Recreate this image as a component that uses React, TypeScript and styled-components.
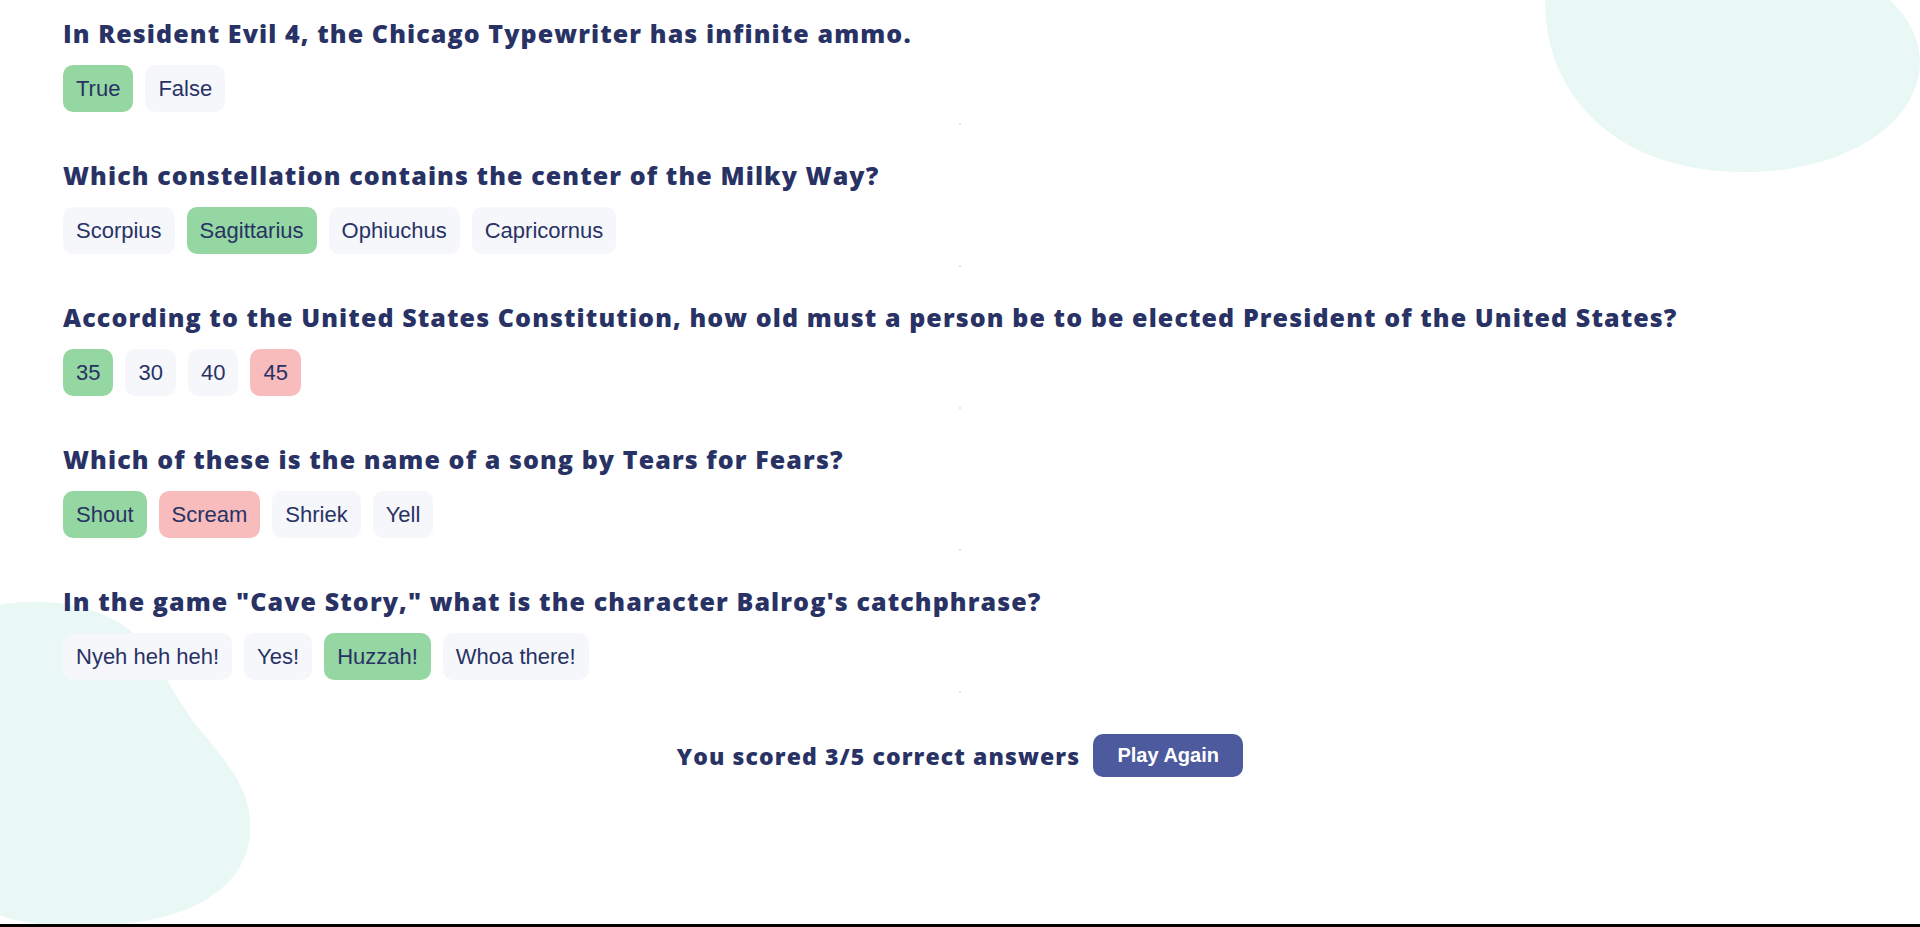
import React from "react";
import styled, { createGlobalStyle } from "styled-components";

const GlobalStyle = createGlobalStyle`
  html, body { margin: 0; padding: 0; background: #ffffff; }
  * { box-sizing: border-box; }
`;

type AnswerState = "neutral" | "correct" | "wrong";

interface Question {
  question: string;
  answers: { text: string; state: AnswerState }[];
}

const questions: Question[] = [
  {
    question: "In Resident Evil 4, the Chicago Typewriter has infinite ammo.",
    answers: [
      { text: "True", state: "correct" },
      { text: "False", state: "neutral" },
    ],
  },
  {
    question: "Which constellation contains the center of the Milky Way?",
    answers: [
      { text: "Scorpius", state: "neutral" },
      { text: "Sagittarius", state: "correct" },
      { text: "Ophiuchus", state: "neutral" },
      { text: "Capricornus", state: "neutral" },
    ],
  },
  {
    question:
      "According to the United States Constitution, how old must a person be to be elected President of the United States?",
    answers: [
      { text: "35", state: "correct" },
      { text: "30", state: "neutral" },
      { text: "40", state: "neutral" },
      { text: "45", state: "wrong" },
    ],
  },
  {
    question: "Which of these is the name of a song by Tears for Fears?",
    answers: [
      { text: "Shout", state: "correct" },
      { text: "Scream", state: "wrong" },
      { text: "Shriek", state: "neutral" },
      { text: "Yell", state: "neutral" },
    ],
  },
  {
    question: 'In the game "Cave Story," what is the character Balrog\'s catchphrase?',
    answers: [
      { text: "Nyeh heh heh!", state: "neutral" },
      { text: "Yes!", state: "neutral" },
      { text: "Huzzah!", state: "correct" },
      { text: "Whoa there!", state: "neutral" },
    ],
  },
];

const Page = styled.main`
  position: relative;
  min-height: 927px;
  border-bottom: 3px solid #000000;
  overflow: hidden;
  background: #ffffff;
`;

const BlobTopRight = styled.svg`
  position: absolute;
  top: 0;
  right: 0;
  width: 375px;
  height: 172px;
  z-index: 0;
`;

const BlobBottomLeft = styled.svg`
  position: absolute;
  left: 0;
  top: 598px;
  width: 252px;
  height: 326px;
  z-index: 0;
`;

const Content = styled.div`
  position: relative;
  z-index: 1;
  display: flex;
  flex-direction: column;
  padding: 16px 63px 0;
`;

const QuestionBlock = styled.section`
  display: flex;
  flex-direction: column;
`;

const QuestionTitle = styled.h2`
  margin: 0;
  font-family: "Open Sans", "Noto Sans", sans-serif;
  font-weight: 800;
  font-size: 25px;
  line-height: 34px;
  color: #293264;
  letter-spacing: 1.1px;
`;

const Answers = styled.div`
  display: flex;
  gap: 12px;
  margin-top: 15px;
`;

const answerBg: Record<AnswerState, string> = {
  neutral: "#f5f7fb",
  correct: "#94d7a2",
  wrong: "#f8bcbc",
};

const AnswerButton = styled.button<{ $state: AnswerState }>`
  height: 47px;
  padding: 0 13px;
  border: none;
  border-radius: 10px;
  background: ${(p) => answerBg[p.$state]};
  color: #293264;
  font-family: "Liberation Sans", Arial, sans-serif;
  font-size: 22px;
  cursor: pointer;
`;

const Divider = styled.div`
  align-self: center;
  width: 2px;
  height: 2px;
  margin: 11px 0 33px;
  background: #dfe1f0;
`;

const Footer = styled.div`
  display: flex;
  justify-content: center;
  align-items: center;
  gap: 13px;
  margin-top: 8px;
`;

const ScoreText = styled.p`
  margin: 0;
  font-family: "Open Sans", "Noto Sans", sans-serif;
  font-weight: 800;
  font-size: 23px;
  letter-spacing: 1.1px;
  color: #293264;
`;

const PlayButton = styled.button`
  width: 150px;
  height: 43px;
  border: none;
  border-radius: 10px;
  background: #4d5b9e;
  color: #ffffff;
  font-family: "Liberation Sans", Arial, sans-serif;
  font-weight: 700;
  font-size: 20px;
  cursor: pointer;
`;

export default function App() {
  return (
    <>
      <GlobalStyle />
      <Page>
        <BlobTopRight viewBox="1545 0 375 172" preserveAspectRatio="none">
          <path
            d="M1545,0 C1545,100 1620,172 1745,172 C1850,172 1920,120 1920,62 C1920,36 1906,16 1890,0 Z"
            fill="#e9f8f4"
          />
        </BlobTopRight>
        <BlobBottomLeft viewBox="0 598 252 326" preserveAspectRatio="none">
          <path
            d="M0,605 C40,597 100,603 133,633 C160,660 172,695 200,730 C232,768 252,792 250,832 C248,882 200,915 130,923 C70,929 22,925 0,915 Z"
            fill="#e9f8f4"
          />
        </BlobBottomLeft>
        <Content>
          {questions.map((q) => (
            <QuestionBlock key={q.question}>
              <QuestionTitle>{q.question}</QuestionTitle>
              <Answers>
                {q.answers.map((a) => (
                  <AnswerButton key={a.text} $state={a.state}>
                    {a.text}
                  </AnswerButton>
                ))}
              </Answers>
              <Divider />
            </QuestionBlock>
          ))}
          <Footer>
            <ScoreText>You scored 3/5 correct answers</ScoreText>
            <PlayButton>Play Again</PlayButton>
          </Footer>
        </Content>
      </Page>
    </>
  );
}
